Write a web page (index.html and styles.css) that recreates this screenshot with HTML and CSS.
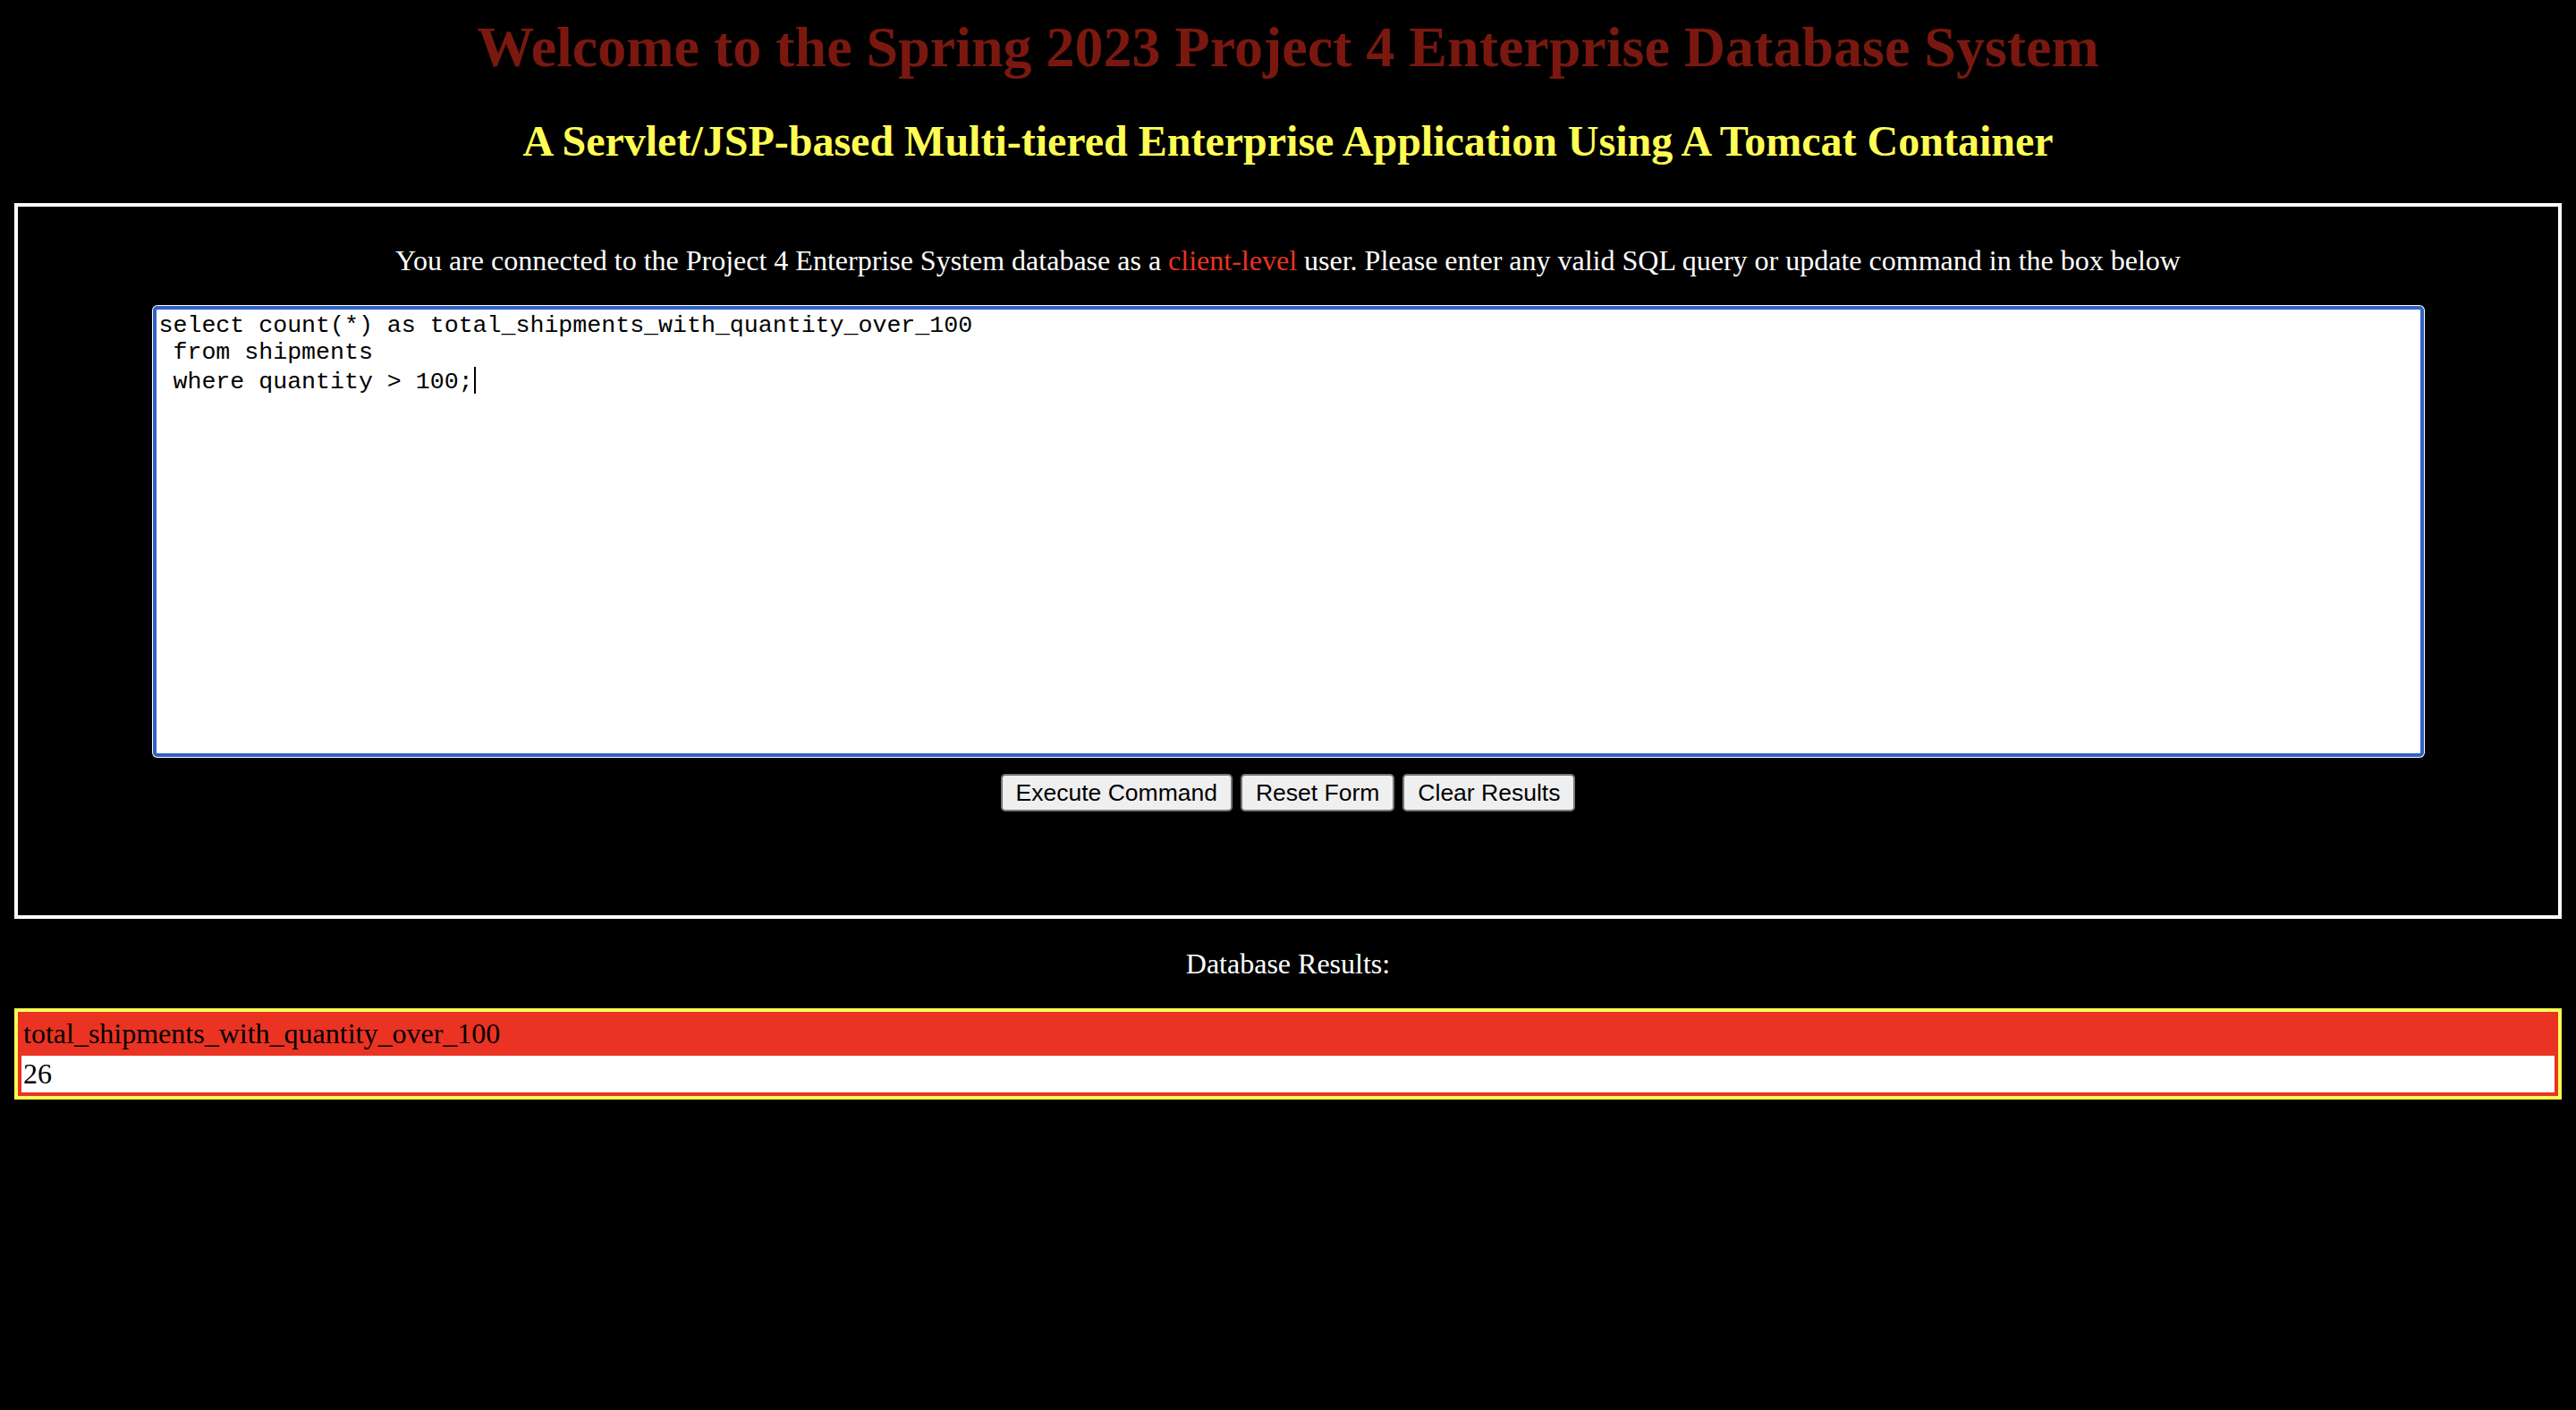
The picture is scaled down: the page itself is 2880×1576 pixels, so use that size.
FILE: index.html
```html
<!DOCTYPE html>
<html lang="en">
<head>
<meta charset="utf-8">
<title>CNT 4714 Remote Database Management System</title>
<link rel="stylesheet" href="styles.css">
</head>
<body>
<h1 class="title">Welcome to the Spring 2023 Project 4 Enterprise Database System</h1>
<h2 class="subtitle">A Servlet/JSP-based Multi-tiered Enterprise Application Using A Tomcat Container</h2>
<div class="panel">
  <p class="intro">You are connected to the Project 4 Enterprise System database as a <span class="level">client-level</span> user. Please enter any valid SQL query or update command in the box below</p>
  <form class="query-form">
    <div class="sql-box" role="textbox" aria-multiline="true">select count(*) as total_shipments_with_quantity_over_100
 from shipments
 where quantity &gt; 100;<span class="caret"></span></div>
    <div class="actions">
      <button type="button" class="btn">Execute Command</button>
      <button type="button" class="btn">Reset Form</button>
      <button type="button" class="btn">Clear Results</button>
    </div>
  </form>
</div>
<p class="results-label">Database Results:</p>
<table class="results">
  <thead>
    <tr><th>total_shipments_with_quantity_over_100</th></tr>
  </thead>
  <tbody>
    <tr><td>26</td></tr>
  </tbody>
</table>
</body>
</html>
```
FILE: styles.css
```css
html {
  background: #000000;
}
body {
  margin: 16px;
  background: #000000;
  color: #ffffff;
  font-family: "Liberation Serif", "Times New Roman", serif;
  font-size: 32px;
}
.title {
  margin: 0 0 40px;
  font-size: 64px;
  font-weight: bold;
  line-height: 1.15;
  color: #7a1810;
  text-align: center;
}
.subtitle {
  margin: 0 0 42px;
  font-size: 48px;
  font-weight: bold;
  line-height: 1.15;
  color: #fffd55;
  text-align: center;
}
.panel {
  border: 4px solid #ffffff;
  padding: 10px 0 116px;
}
.intro {
  margin: 32px 0;
  text-align: center;
  line-height: 1.15;
}
.level {
  color: #ea3323;
}
.query-form {
  margin: 0;
}
.sql-box {
  box-sizing: border-box;
  width: 2539px;
  height: 504px;
  margin: 0 auto;
  padding: 3px;
  background: #ffffff;
  color: #000000;
  border: 4px solid #2f62c6;
  border-radius: 5px;
  box-shadow: 0 0 0 1px #ffffff;
  font-family: "Liberation Mono", "Courier New", monospace;
  font-size: 26.6px;
  line-height: 30.5px;
  white-space: pre;
  overflow: hidden;
}
.caret {
  display: inline-block;
  width: 2px;
  height: 30px;
  background: #000000;
  vertical-align: -6px;
  margin-left: 1px;
}
.actions {
  display: flex;
  justify-content: center;
  gap: 9px;
  margin-top: 19px;
}
.btn {
  box-sizing: border-box;
  height: 42px;
  padding: 0 15px;
  background: #efefef;
  color: #000000;
  border: 2px solid #767676;
  border-radius: 5px;
  font-family: "Liberation Sans", Arial, sans-serif;
  font-size: 26.5px;
  line-height: 36px;
}
.results-label {
  margin: 32px 0;
  text-align: center;
  line-height: 1.15;
}
.results {
  width: 100%;
  border: 4px solid #fffd55;
  border-spacing: 4px;
  background: #ea3323;
  color: #000000;
}
.results th,
.results td {
  padding: 2px;
  text-align: left;
  font-weight: normal;
  line-height: 37px;
}
.results td {
  background: #ffffff;
}
```
